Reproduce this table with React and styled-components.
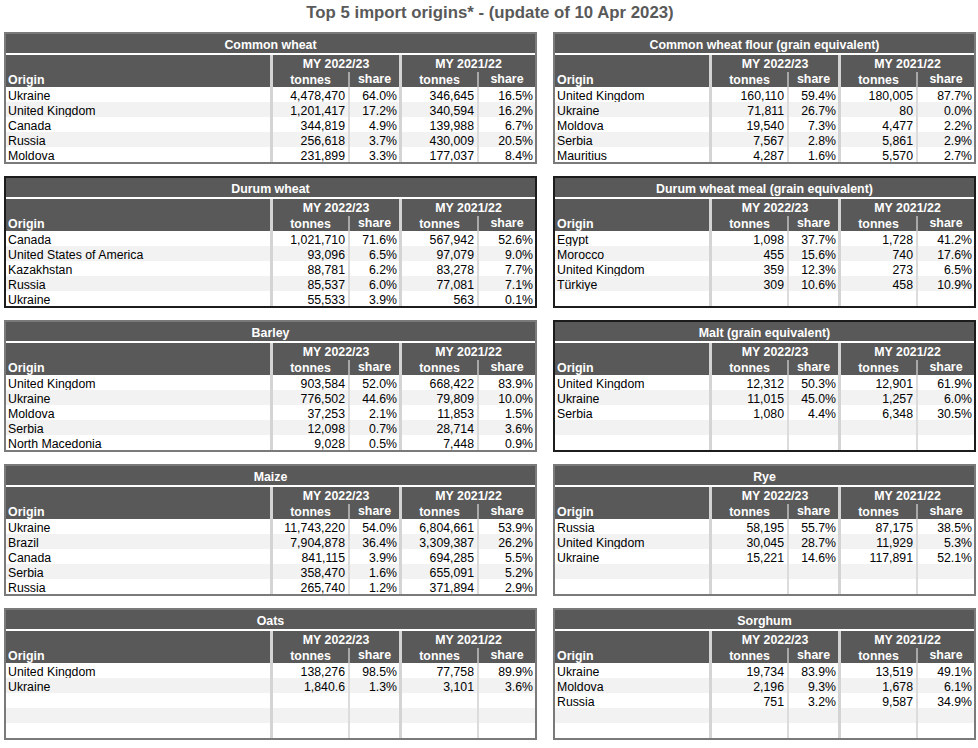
import React from "react";
import styled, { createGlobalStyle } from "styled-components";

const GlobalStyle = createGlobalStyle`
  html, body { margin: 0; padding: 0; background: #ffffff; }
  body { font-family: "Liberation Sans", Arial, sans-serif; }
`;

const Page = styled.div`
  width: 978px;
  height: 748px;
  overflow: hidden;
  box-sizing: border-box;
  padding: 0 2px 0 4px;
`;

const Heading = styled.h1`
  margin: 0;
  box-sizing: border-box;
  height: 32px;
  padding-top: 1px;
  line-height: 24px;
  font-size: 16.8px;
  font-weight: bold;
  color: #595959;
  text-align: center;
`;

const Grid = styled.div`
  display: grid;
  grid-template-columns: 533px 423px;
  column-gap: 16px;
  row-gap: 12px;
`;

const Panel = styled.section`
  box-sizing: border-box;
  height: 132px;
  border: 2px solid ${(p) => (p.$dark ? "#1c1c1c" : "#7a7a7a")};
  background: #595959;
  display: flex;
  flex-direction: column;
`;

const PanelTitle = styled.div`
  box-sizing: border-box;
  height: 21px;
  padding-top: 2px;
  line-height: 19px;
  border-bottom: 2px solid #ffffff;
  color: #ffffff;
  font-weight: bold;
  font-size: 12.4px;
  text-align: center;
`;

const cols = "1fr 78px 51px 78px 58px";

const Head = styled.div`
  display: grid;
  grid-template-columns: ${cols};
  grid-template-rows: 16px 16px;
  color: #ffffff;
  font-weight: bold;
  font-size: 12.4px;
  line-height: 16px;
`;

const OriginHead = styled.div`
  grid-row: 1 / span 2;
  align-self: end;
  padding-left: 2px;
  line-height: 16px;
  transform: translateY(1px);
`;

const YearHead = styled.div`
  grid-column: span 2;
  text-align: center;
  padding-top: 1px;
  border-left: 3px solid #d4d4d4;
`;

const SubHead = styled.div`
  box-sizing: border-box;
  text-align: center;
  padding-top: 1px;
  border-left: ${(p) => (p.$group ? "3px solid #d4d4d4" : "2px solid #a8a8a8")};
  ${(p) => (p.$group ? "" : "margin-top: 1px; height: 15px; line-height: 15px; padding-top: 0;")}
`;

const Body = styled.div`
  flex: 1;
  display: flex;
  flex-direction: column;
`;

const Row = styled.div`
  display: grid;
  grid-template-columns: ${cols};
  height: 15px;
  font-size: 12.3px;
  color: #000000;
  background: ${(p) => (p.$alt ? "#f2f2f2" : "#ffffff")};
`;

const NameCell = styled.div`
  box-sizing: border-box;
  padding-left: 2px;
  padding-top: 2px;
  line-height: 15px;
  height: 15px;
  white-space: nowrap;
`;

const NumCell = styled.div`
  box-sizing: border-box;
  text-align: right;
  padding-top: 2px;
  line-height: 15px;
  height: 15px;
  padding-right: ${(p) => (p.$group ? "3px" : "2px")};
  border-left: ${(p) => (p.$group ? "3px solid #d4d4d4" : "2px solid #dcdcdc")};
  white-space: nowrap;
`;

const tables = [
  {
    title: "Common wheat",
    rows: [
      ["Ukraine", "4,478,470", "64.0%", "346,645", "16.5%"],
      ["United Kingdom", "1,201,417", "17.2%", "340,594", "16.2%"],
      ["Canada", "344,819", "4.9%", "139,988", "6.7%"],
      ["Russia", "256,618", "3.7%", "430,009", "20.5%"],
      ["Moldova", "231,899", "3.3%", "177,037", "8.4%"],
    ],
  },
  {
    title: "Common wheat flour (grain equivalent)",
    rows: [
      ["United Kingdom", "160,110", "59.4%", "180,005", "87.7%"],
      ["Ukraine", "71,811", "26.7%", "80", "0.0%"],
      ["Moldova", "19,540", "7.3%", "4,477", "2.2%"],
      ["Serbia", "7,567", "2.8%", "5,861", "2.9%"],
      ["Mauritius", "4,287", "1.6%", "5,570", "2.7%"],
    ],
  },
  {
    title: "Durum wheat",
    dark: true,
    rows: [
      ["Canada", "1,021,710", "71.6%", "567,942", "52.6%"],
      ["United States of America", "93,096", "6.5%", "97,079", "9.0%"],
      ["Kazakhstan", "88,781", "6.2%", "83,278", "7.7%"],
      ["Russia", "85,537", "6.0%", "77,081", "7.1%"],
      ["Ukraine", "55,533", "3.9%", "563", "0.1%"],
    ],
  },
  {
    title: "Durum wheat meal (grain equivalent)",
    dark: true,
    rows: [
      ["Egypt", "1,098", "37.7%", "1,728", "41.2%"],
      ["Morocco", "455", "15.6%", "740", "17.6%"],
      ["United Kingdom", "359", "12.3%", "273", "6.5%"],
      ["Türkiye", "309", "10.6%", "458", "10.9%"],
    ],
  },
  {
    title: "Barley",
    rows: [
      ["United Kingdom", "903,584", "52.0%", "668,422", "83.9%"],
      ["Ukraine", "776,502", "44.6%", "79,809", "10.0%"],
      ["Moldova", "37,253", "2.1%", "11,853", "1.5%"],
      ["Serbia", "12,098", "0.7%", "28,714", "3.6%"],
      ["North Macedonia", "9,028", "0.5%", "7,448", "0.9%"],
    ],
  },
  {
    title: "Malt (grain equivalent)",
    dark: true,
    rows: [
      ["United Kingdom", "12,312", "50.3%", "12,901", "61.9%"],
      ["Ukraine", "11,015", "45.0%", "1,257", "6.0%"],
      ["Serbia", "1,080", "4.4%", "6,348", "30.5%"],
    ],
  },
  {
    title: "Maize",
    rows: [
      ["Ukraine", "11,743,220", "54.0%", "6,804,661", "53.9%"],
      ["Brazil", "7,904,878", "36.4%", "3,309,387", "26.2%"],
      ["Canada", "841,115", "3.9%", "694,285", "5.5%"],
      ["Serbia", "358,470", "1.6%", "655,091", "5.2%"],
      ["Russia", "265,740", "1.2%", "371,894", "2.9%"],
    ],
  },
  {
    title: "Rye",
    rows: [
      ["Russia", "58,195", "55.7%", "87,175", "38.5%"],
      ["United Kingdom", "30,045", "28.7%", "11,929", "5.3%"],
      ["Ukraine", "15,221", "14.6%", "117,891", "52.1%"],
    ],
  },
  {
    title: "Oats",
    rows: [
      ["United Kingdom", "138,276", "98.5%", "77,758", "89.9%"],
      ["Ukraine", "1,840.6", "1.3%", "3,101", "3.6%"],
    ],
  },
  {
    title: "Sorghum",
    rows: [
      ["Ukraine", "19,734", "83.9%", "13,519", "49.1%"],
      ["Moldova", "2,196", "9.3%", "1,678", "6.1%"],
      ["Russia", "751", "3.2%", "9,587", "34.9%"],
    ],
  },
];

function OriginTable({ title, rows, dark }) {
  const filled = [...rows];
  while (filled.length < 5) filled.push(["", "", "", "", ""]);
  return (
    <Panel $dark={dark}>
      <PanelTitle>{title}</PanelTitle>
      <Head>
        <OriginHead>Origin</OriginHead>
        <YearHead>MY 2022/23</YearHead>
        <YearHead>MY 2021/22</YearHead>
        <SubHead $group>tonnes</SubHead>
        <SubHead>share</SubHead>
        <SubHead $group>tonnes</SubHead>
        <SubHead>share</SubHead>
      </Head>
      <Body>
        {filled.map((r, i) => (
          <Row key={i} $alt={i % 2 === 1}>
            <NameCell>{r[0]}</NameCell>
            <NumCell $group>{r[1]}</NumCell>
            <NumCell>{r[2]}</NumCell>
            <NumCell $group>{r[3]}</NumCell>
            <NumCell>{r[4]}</NumCell>
          </Row>
        ))}
      </Body>
    </Panel>
  );
}

export default function App() {
  return (
    <Page>
      <GlobalStyle />
      <Heading>Top 5 import origins* - (update of 10 Apr 2023)</Heading>
      <Grid>
        {tables.map((t) => (
          <OriginTable key={t.title} {...t} />
        ))}
      </Grid>
    </Page>
  );
}
